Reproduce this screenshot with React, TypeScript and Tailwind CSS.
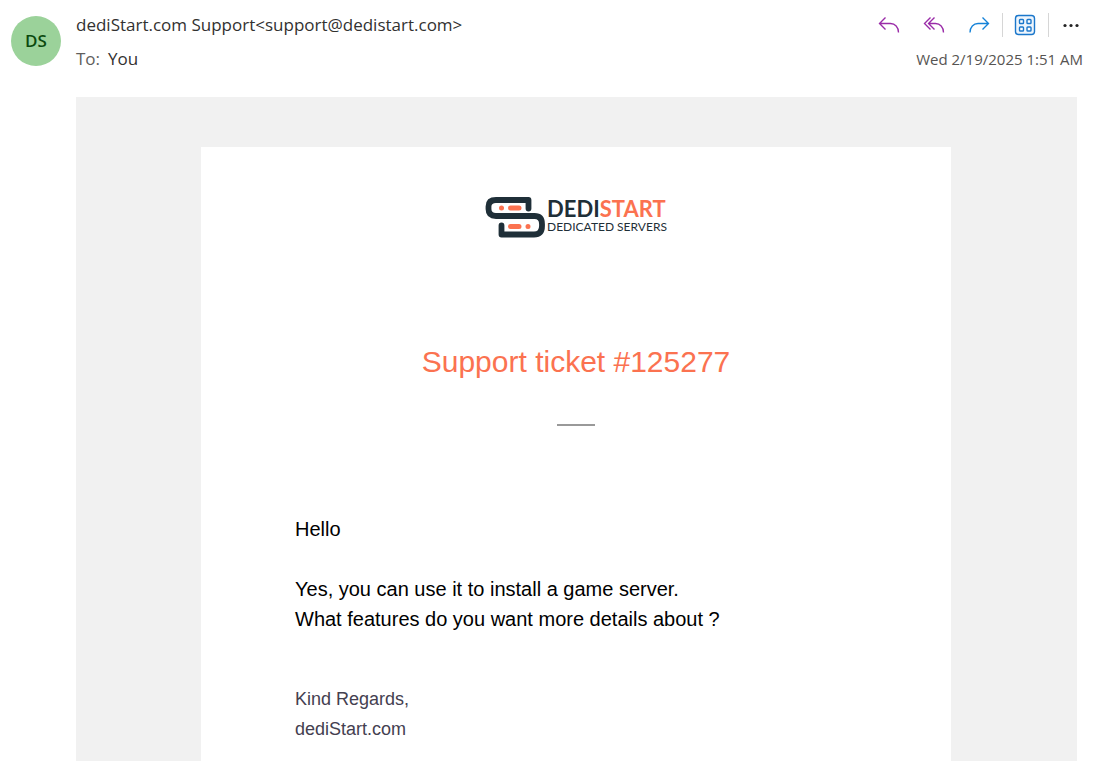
import type { JSX, ReactNode } from "react";

type IconButtonProps = {
  label: string;
  className?: string;
  children: ReactNode;
};

function IconButton({ label, className = "", children }: IconButtonProps): JSX.Element {
  return (
    <button
      type="button"
      aria-label={label}
      className={`flex h-6 w-6 items-center justify-center rounded ${className}`}
    >
      {children}
    </button>
  );
}

function ReplyIcon(): JSX.Element {
  return (
    <svg width="24" height="24" viewBox="0 0 24 24" fill="none" stroke="currentColor" strokeWidth="1.35" aria-hidden="true">
      <path d="m8.500 4.500-6 6 6 6M2.500 10.500h11c4.500 0 8 3.500 8 9" />
    </svg>
  );
}

function ReplyAllIcon(): JSX.Element {
  return (
    <svg width="24" height="24" viewBox="0 0 24 24" fill="none" stroke="currentColor" strokeWidth="1.35" aria-hidden="true">
      <path d="m8.500 4.500-6 6 6 6M12.500 4.500l-6 6 6 6M6.500 10.500h7c4.500 0 8 3.500 8 9" />
    </svg>
  );
}

function ForwardIcon(): JSX.Element {
  return (
    <svg width="24" height="24" viewBox="0 0 24 24" fill="none" stroke="currentColor" strokeWidth="1.35" aria-hidden="true">
      <path d="m15.500 4.500 6 6-6 6M21.500 10.500H11c-4.500 0-8 3.500-8 9" />
    </svg>
  );
}

function AppsIcon(): JSX.Element {
  return (
    <svg width="24" height="24" viewBox="0 0 24 24" fill="none" stroke="currentColor" aria-hidden="true">
      <rect x="2.500" y="2.500" width="19" height="19" rx="3" fill="#eef5fc" strokeWidth="1.400" />
      <g fill="#fff" strokeWidth="1.400">
        <rect x="6.500" y="6.500" width="4" height="4" rx="0.800" />
        <rect x="14" y="6.500" width="4" height="4" rx="0.800" />
        <rect x="6.500" y="14" width="4" height="4" rx="0.800" />
        <rect x="14" y="14" width="4" height="4" rx="0.800" />
      </g>
    </svg>
  );
}

function MoreIcon(): JSX.Element {
  return (
    <svg width="24" height="24" viewBox="0 0 24 24" fill="currentColor" aria-hidden="true">
      <circle cx="6" cy="12.500" r="1.600" />
      <circle cx="12" cy="12.500" r="1.600" />
      <circle cx="18" cy="12.500" r="1.600" />
    </svg>
  );
}

function Logo(): JSX.Element {
  return (
    <div className="flex items-start justify-center">
      <svg width="60" height="42" viewBox="0 0 60 42" fill="none" aria-hidden="true">
        <path
          d="M43.500 11.500V3H11Q3.500 3 3.500 9.500v2.500q0 7 7.500 7h38.500q7.500 0 7.500 8v2q0 8.500-8 8.500H16.500V28.500"
          stroke="#1f2f38"
          strokeWidth="5.800"
          strokeLinecap="round"
          strokeLinejoin="round"
        />
        <g stroke="#fb7250" strokeWidth="5" strokeLinecap="round">
          <path d="M16.500 11h.01M25.500 11h8.500M25.500 29.500h8.500M43 29.500h.01" />
        </g>
      </svg>
      <div className="pt-1 pl-0.5 font-['Lato',sans-serif] text-[#1f2f38]">
        <div className="text-[22px] leading-4 font-bold">
          DEDI<span className="text-[#fb7250]">START</span>
        </div>
        <div className="pt-1 text-xs leading-3">DEDICATED SERVERS</div>
      </div>
    </div>
  );
}

function MessageHeader(): JSX.Element {
  return (
    <header className="flex items-start pt-[13px] pr-6 pl-[11px] font-['Open_Sans',sans-serif] text-[#323130]">
      <div className="mt-[3px] flex h-[50px] w-[50px] items-center justify-center rounded-full bg-[#9bd29a] text-[17px] font-semibold text-[#0b4a0f]">
        DS
      </div>
      <div className="min-w-0 flex-1 pl-[15px]">
        <h1 className="text-[17px] leading-6">dediStart.com Support&lt;support@dedistart.com&gt;</h1>
        <p className="mt-[10px] flex gap-2 text-[17px] leading-6">
          <span className="text-[#605e5c]">To:</span>
          <span>You</span>
        </p>
      </div>
      <div className="flex flex-col items-end">
        <div className="flex items-center text-[#9a2ba8]">
          <IconButton label="Reply">
            <ReplyIcon />
          </IconButton>
          <IconButton label="Reply all" className="ml-[21px]">
            <ReplyAllIcon />
          </IconButton>
          <IconButton label="Forward" className="ml-[21px] text-[#1582d8]">
            <ForwardIcon />
          </IconButton>
          <span className="ml-[11px] h-6 w-px bg-[#d6d6d6]" />
          <IconButton label="Apps" className="ml-[10px] text-[#1b77cb]">
            <AppsIcon />
          </IconButton>
          <span className="ml-[11px] h-6 w-px bg-[#d6d6d6]" />
          <IconButton label="More actions" className="ml-[10px] text-[#242424]">
            <MoreIcon />
          </IconButton>
        </div>
        <time dateTime="2025-02-19T01:51" className="mt-[10px] text-[15px] leading-6 text-[#565452]">
          Wed 2/19/2025 1:51 AM
        </time>
      </div>
    </header>
  );
}

export default function App(): JSX.Element {
  return (
    <div className="flex min-h-screen flex-col bg-white">
      <MessageHeader />
      <main className="mt-[26px] mr-[30px] ml-[76px] flex flex-1 flex-col bg-[#f1f1f1] pt-[50px] pr-[17px] pl-4 font-['Liberation_Sans',Arial,sans-serif]">
        <article className="mx-auto w-full max-w-[750px] flex-1 bg-white pt-[50px]">
          <Logo />
          <h2 className="mt-[101px] text-center text-3xl leading-11 text-[#fb7250]">
            Support ticket #125277
          </h2>
          <hr className="mx-auto mt-10 w-[38px] border-0 border-t-2 border-[#999]" />
          <div className="mt-[88px] px-[94px] text-xl leading-[30px] text-black">
            <p>Hello</p>
            <p className="mt-[30px]">
              Yes, you can use it to install a game server.
              <br />
              What features do you want more details about ?
            </p>
            <p className="mt-[50px] text-lg leading-[30px] text-[#444050]">
              Kind Regards,
              <br />
              dediStart.com
            </p>
          </div>
        </article>
      </main>
    </div>
  );
}
